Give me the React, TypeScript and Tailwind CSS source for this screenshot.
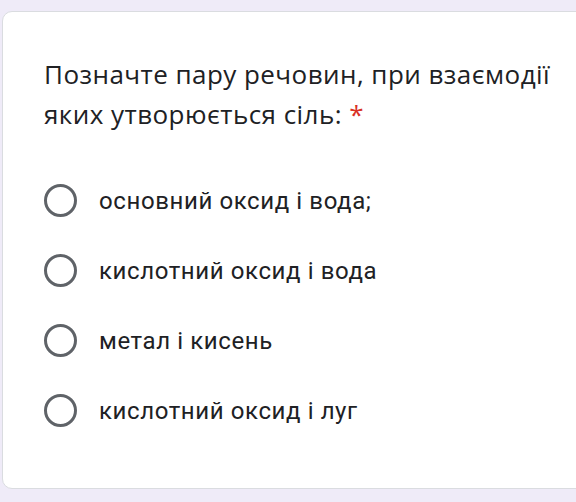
const options = [
  "основний оксид і вода;",
  "кислотний оксид і вода",
  "метал і кисень",
  "кислотний оксид і луг",
];

function Radio() {
  return <span className="block w-[33px] h-[33px] rounded-full border-[3.5px] border-[#5f6368] shrink-0" />;
}

export default function App() {
  return (
    <div className="w-[576px] h-[502px] bg-[#efebf8] pt-[11px] pl-[2px] overflow-hidden">
      <div className="w-[600px] h-[478px] bg-white rounded-l-[10px] border border-[#dadce0] pl-[41px] pt-[42px]">
        <div
          className="text-[26px] leading-[40px] text-[#202124] tracking-[0.45px]"
          style={{ fontFamily: '"Open Sans", "Noto Sans", sans-serif' }}
        >
          Позначте пару речовин, при взаємодії
          <br />
          яких утворюється сіль: <span className="text-[#d93025]">*</span>
        </div>
        <div className="flex flex-col mt-[50px] gap-[37px]">
          {options.map((o) => (
            <div key={o} className="flex items-center h-[33px]">
              <Radio />
              <span
                className="ml-[22px] text-[24px] font-normal text-[#202124] tracking-[0.6px]"
                style={{ fontFamily: 'Roboto, "Liberation Sans", sans-serif' }}
              >
                {o}
              </span>
            </div>
          ))}
        </div>
      </div>
    </div>
  );
}
